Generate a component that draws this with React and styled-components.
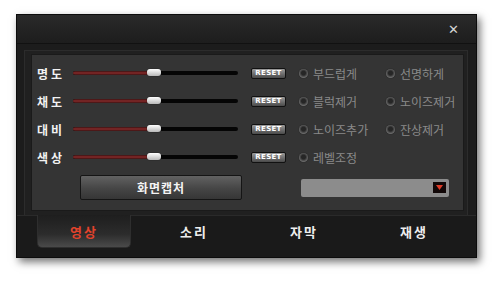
import styled, { createGlobalStyle } from "styled-components";

const GlobalStyles = createGlobalStyle`
  body {
    margin: 0;
    background: #ffffff;
    font-family: "Noto Sans CJK KR", "Noto Sans", sans-serif;
  }
`;

const Page = styled.div`
  width: 500px;
  height: 283px;
  padding: 14px 0 0 16px;
  box-sizing: border-box;
`;

const Window = styled.div`
  width: 461px;
  height: 244px;
  display: flex;
  flex-direction: column;
  background: #1c1c1c;
  border: 1px solid #0c0c0c;
  box-sizing: border-box;
  box-shadow: 3px 4px 8px rgba(0, 0, 0, 0.55);
`;

const TitleBar = styled.div`
  height: 28px;
  display: flex;
  align-items: center;
  justify-content: flex-end;
  padding-right: 17px;
  background: linear-gradient(#2a2a2a, #1d1d1d);
  border-bottom: 1px solid #111;
`;

const CloseButton = styled.span`
  color: #d4d4d4;
  font-family: "DejaVu Sans", sans-serif;
  font-weight: bold;
  font-size: 13px;
  line-height: 1;
`;

const Body = styled.div`
  padding: 6px 8px 0 7px;
`;

const Frame = styled.div`
  border: 1px solid #2c2c2c;
  border-bottom: none;
  background: #202020;
  padding: 3px 3px 4px 6px;
`;

const Panel = styled.div`
  height: 157px;
  box-sizing: border-box;
  background: #343434;
  border: 1px solid #1a1a1a;
  padding: 4px 0 0 5px;
  display: flex;
  flex-direction: column;
`;

const Row = styled.div`
  height: 28px;
  display: flex;
  align-items: center;
`;

const Label = styled.span`
  flex-shrink: 0;
  width: 36px;
  color: #f2f2f2;
  font-weight: bold;
  font-size: 12px;
  letter-spacing: 3px;
`;

const Track = styled.div`
  position: relative;
  flex-shrink: 0;
  width: 165px;
  height: 4px;
  background: #050505;
  border-radius: 2px;
`;

const Fill = styled.div`
  height: 100%;
  background: linear-gradient(#3a1212, #862a2a 50%, #3a1212);
  border-radius: 2px;
`;

const Thumb = styled.div`
  position: absolute;
  top: -2px;
  width: 14px;
  height: 7px;
  margin-left: -4px;
  border-radius: 3px;
  background: linear-gradient(#ffffff, #b8b8b8);
  box-shadow: 0 0 1px #000;
`;

const ResetButton = styled.span`
  flex-shrink: 0;
  box-sizing: border-box;
  margin-left: 13px;
  width: 35px;
  height: 11px;
  display: flex;
  align-items: center;
  justify-content: center;
  background: linear-gradient(#9a9a9a, #4a4a4a);
  border: 1px solid #111;
  border-radius: 2px;
  color: #fff;
  font-family: "DejaVu Sans", sans-serif;
  font-weight: bold;
  font-size: 7px;
  letter-spacing: 0.3px;
`;

const Option = styled.span`
  flex-shrink: 0;
  display: flex;
  align-items: center;
  gap: 5px;
  width: ${(p) => p.$width}px;
  margin-left: ${(p) => p.$offset}px;
  color: #8a8a8a;
  font-size: 12px;
  white-space: nowrap;
`;

const Radio = styled.span`
  width: 9px;
  height: 9px;
  border-radius: 50%;
  background: radial-gradient(circle at 50% 45%, #262626 30%, #6e6e6e 70%, #3a3a3a);
  box-shadow: 0 0 1px #111;
`;

const BottomRow = styled.div`
  display: flex;
  align-items: center;
  margin-top: 4px;
  padding-left: 43px;
`;

const CaptureButton = styled.div`
  width: 162px;
  height: 25px;
  box-sizing: border-box;
  display: flex;
  align-items: center;
  justify-content: center;
  background: linear-gradient(#626262, #454545 55%, #363636);
  border: 1px solid #151515;
  border-radius: 2px;
  color: #f4f4f4;
  font-weight: bold;
  font-size: 12px;
  letter-spacing: 1px;
`;

const Select = styled.div`
  margin-left: 59px;
  width: 148px;
  height: 18px;
  box-sizing: border-box;
  display: flex;
  align-items: center;
  justify-content: flex-end;
  padding-right: 3px;
  background: #8c8c8c;
  border-radius: 2px;
`;

const ArrowBox = styled.span`
  width: 13px;
  height: 11px;
  background: #120808;
  display: flex;
  align-items: center;
  justify-content: center;
`;

const TabBar = styled.div`
  flex: 1;
  display: flex;
  padding: 0 7px 0 12px;
  background: #1a1a1a;
  border-top: 1px solid #2a2a2a;
`;

const Tab = styled.div`
  width: 110px;
  display: flex;
  justify-content: center;
`;

const TabFace = styled.div`
  width: 92px;
  height: 32px;
  margin-top: -1px;
  display: flex;
  align-items: center;
  justify-content: center;
  color: ${(p) => (p.$active ? "#e2432c" : "#eeeeee")};
  font-weight: bold;
  font-size: 13px;
  letter-spacing: 2px;
  background: ${(p) => (p.$active ? "linear-gradient(#1e1e1e, #2c2c2c 60%, #4a4a4a)" : "transparent")};
  border: 1px solid ${(p) => (p.$active ? "#2e2e2e" : "transparent")};
  border-top: none;
  border-radius: 0 0 5px 5px;
`;

const sliders = [
  { label: "명도", value: 0.47, options: ["부드럽게", "선명하게"] },
  { label: "채도", value: 0.47, options: ["블럭제거", "노이즈제거"] },
  { label: "대비", value: 0.47, options: ["노이즈추가", "잔상제거"] },
  { label: "색상", value: 0.47, options: ["레벨조정"] },
];

const tabs = ["영상", "소리", "자막", "재생"];

function App() {
  return (
    <Page>
      <GlobalStyles />
      <Window>
        <TitleBar>
          <CloseButton>✕</CloseButton>
        </TitleBar>
        <Body>
          <Frame>
            <Panel>
              {sliders.map((s) => (
                <Row key={s.label}>
                  <Label>{s.label}</Label>
                  <Track>
                    <Fill style={{ width: `${s.value * 100}%` }} />
                    <Thumb style={{ left: `${s.value * 100}%` }} />
                  </Track>
                  <ResetButton>RESET</ResetButton>
                  {s.options.map((o, i) => (
                    <Option key={o} $offset={i === 0 ? 13 : 0} $width={87}>
                      <Radio />
                      {o}
                    </Option>
                  ))}
                </Row>
              ))}
              <BottomRow>
                <CaptureButton>화면캡처</CaptureButton>
                <Select>
                  <ArrowBox>
                    <svg width="7" height="5" viewBox="0 0 7 5">
                      <path d="M0 0 L7 0 L3.5 5 Z" fill="#e03c28" />
                    </svg>
                  </ArrowBox>
                </Select>
              </BottomRow>
            </Panel>
          </Frame>
        </Body>
        <TabBar>
          {tabs.map((t, i) => (
            <Tab key={t}>
              <TabFace $active={i === 0}>{t}</TabFace>
            </Tab>
          ))}
        </TabBar>
      </Window>
    </Page>
  );
}

export default App;
